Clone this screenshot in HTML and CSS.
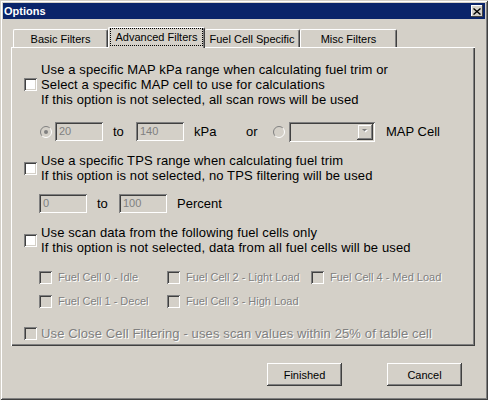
FILE: index.html
```html
<!DOCTYPE html>
<html lang="en">
<head>
    <meta charset="UTF-8">
    <title>Options</title>
    <link rel="stylesheet" href="styles.css">
</head>
<body>
    <div class="window">
        <div class="titlebar">
            <span class="title">Options</span>
            <span class="close">
                <svg width="8" height="7" viewBox="0 0 8 7">
                    <path d="M0.5 0.5L7.5 6.5M7.5 0.5L0.5 6.5" stroke="#000" stroke-width="1.4"/>
                </svg>
            </span>
        </div>

        <div class="dialog">
            <div class="tabs">
                <div class="tab tab-basic">Basic Filters</div>
                <div class="tab tab-active"><span class="focus">Advanced Filters</span></div>
                <div class="tab tab-fuel">Fuel Cell Specific</div>
                <div class="tab tab-misc">Misc Filters</div>
            </div>

            <div class="panel">
                <!-- MAP kPa option -->
                <div class="option opt-map">
                    <span class="check"></span>
                    <div class="label">Use a specific MAP kPa range when calculating fuel trim or<br>
                        Select a specific MAP cell to use for calculations<br>
                        If this option is not selected, all scan rows will be used</div>
                </div>
                <div class="range range-map">
                    <svg class="radio" width="12" height="12" viewBox="0 0 12 12">
                        <circle cx="6" cy="6" r="5.5" fill="#d4d0c8"/>
                        <path d="M2.11 9.89A5.5 5.5 0 0 1 9.89 2.11" fill="none" stroke="#808080"/>
                        <path d="M9.89 2.11A5.5 5.5 0 0 1 2.11 9.89" fill="none" stroke="#fff"/>
                        <circle cx="6" cy="6" r="2" fill="#808080"/>
                    </svg>
                    <span class="field">20</span>
                    <span class="word w-to">to</span>
                    <span class="field">140</span>
                    <span class="word w-kpa">kPa</span>
                    <span class="word w-or">or</span>
                    <svg class="radio" width="12" height="12" viewBox="0 0 12 12">
                        <circle cx="6" cy="6" r="5.5" fill="#d4d0c8"/>
                        <path d="M2.11 9.89A5.5 5.5 0 0 1 9.89 2.11" fill="none" stroke="#808080"/>
                        <path d="M9.89 2.11A5.5 5.5 0 0 1 2.11 9.89" fill="none" stroke="#fff"/>
                    </svg>
                    <span class="combo">
                        <span class="drop">
                            <svg width="7" height="5" viewBox="0 0 7 5">
                                <path d="M1 1H6L3.5 3.5Z" fill="#fff"/>
                                <path d="M0 0H5L2.5 2.5Z" fill="#808080"/>
                            </svg>
                        </span>
                    </span>
                    <span class="word w-cell">MAP Cell</span>
                </div>

                <!-- TPS option -->
                <div class="option opt-tps">
                    <span class="check"></span>
                    <div class="label">Use a specific TPS range when calculating fuel trim<br>
                        If this option is not selected, no TPS filtering will be used</div>
                </div>
                <div class="range range-tps">
                    <span class="field">0</span>
                    <span class="word w-to2">to</span>
                    <span class="field">100</span>
                    <span class="word w-pct">Percent</span>
                </div>

                <!-- fuel cell option -->
                <div class="option opt-cells">
                    <span class="check"></span>
                    <div class="label">Use scan data from the following fuel cells only<br>
                        If this option is not selected, data from all fuel cells will be used</div>
                </div>
                <div class="cells">
                    <div class="cell"><span class="check off"></span><span class="dis">Fuel Cell 0 - Idle</span></div>
                    <div class="cell"><span class="check off"></span><span class="dis">Fuel Cell 2 - Light Load</span></div>
                    <div class="cell"><span class="check off"></span><span class="dis">Fuel Cell 4 - Med Load</span></div>
                </div>
                <div class="cells">
                    <div class="cell"><span class="check off"></span><span class="dis">Fuel Cell 1 - Decel</span></div>
                    <div class="cell"><span class="check off"></span><span class="dis">Fuel Cell 3 - High Load</span></div>
                </div>

                <div class="option opt-close">
                    <span class="check off"></span>
                    <div class="label dis">Use Close Cell Filtering - uses scan values within 25% of table cell</div>
                </div>
            </div>

            <div class="buttons">
                <button class="btn">Finished</button>
                <button class="btn">Cancel</button>
            </div>
        </div>
    </div>
</body>
</html>
```

FILE: styles.css
```css
* {
    box-sizing: border-box;
}

body {
    margin: 0;
    width: 488px;
    height: 400px;
    overflow: hidden;
    background: #d4d0c8;
    font-family: "Liberation Sans", Arial, sans-serif;
    color: #000;
}

.window {
    width: 488px;
    height: 400px;
    padding: 3px;
    background: #d4d0c8;
    box-shadow: inset 1px 1px 0 #d4d0c8, inset -1px -1px 0 #404040,
                inset 2px 2px 0 #fff, inset -2px -2px 0 #808080;
}

.titlebar {
    height: 16px;
    background: #0a246a;
    display: flex;
    align-items: center;
    justify-content: space-between;
    padding: 0 2px 0 1px;
}

.title {
    color: #fff;
    font-weight: bold;
    font-size: 11px;
}

.close {
    width: 12px;
    height: 12px;
    background: #d4d0c8;
    display: flex;
    align-items: center;
    justify-content: center;
    box-shadow: inset -1px -1px 0 #404040, inset 1px 1px 0 #fff;
}

.dialog {
    padding: 8px 0 0 8px;
}

/* tabs */
.tabs {
    display: flex;
    align-items: flex-end;
    height: 20px;
    margin-left: 2px;
    position: relative;
    z-index: 1;
}

.tab {
    height: 18px;
    font-size: 11px;
    display: flex;
    align-items: center;
    justify-content: center;
    background: #d4d0c8;
    border-left: 1px solid #fff;
    border-top: 1px solid #fff;
    border-right: 1px solid #404040;
    border-radius: 2px 2px 0 0;
    box-shadow: inset -1px 0 0 #808080;
}

.tab-basic { width: 95px; }
.tab-fuel { width: 95px; border-left: none; }
.tab-misc { width: 97px; }

.tab-active {
    width: 97px;
    height: 21px;
    margin-bottom: -1px;
    align-items: flex-start;
    padding: 0 1px 0 1px;
}

.focus {
    flex: 1;
    height: 18px;
    border: 1px dotted #000;
    display: flex;
    align-items: center;
    justify-content: center;
    font-size: 11px;
}

.panel {
    width: 464px;
    height: 299px;
    padding-top: 15px;
    box-shadow: inset 1px 1px 0 #fff, inset -1px -1px 0 #404040, inset -2px -2px 0 #808080;
}

/* controls */
.check {
    flex: none;
    width: 13px;
    height: 13px;
    background: #fff;
    box-shadow: inset 1px 1px 0 #808080, inset -1px -1px 0 #fff,
                inset 2px 2px 0 #404040, inset -2px -2px 0 #d4d0c8;
}

.check.off {
    background: #d4d0c8;
}

.dis {
    color: #808080;
    text-shadow: 1px 1px 0 #fff;
}

.option {
    display: flex;
    align-items: center;
    padding-left: 13px;
    font-size: 13px;
    line-height: 15px;
    letter-spacing: 0.12px;
}

.option .label {
    margin-left: 4px;
}

.opt-map { height: 45px; }
.opt-tps { height: 30px; margin-top: 11px; }
.opt-cells { height: 30px; margin-top: 12px; }
.opt-close { height: 16px; margin-top: 17px; }

.range {
    display: flex;
    align-items: center;
    font-size: 13px;
}

.range-map {
    height: 21px;
    margin-top: 14px;
    padding-left: 29px;
}

.range-tps {
    height: 20px;
    margin-top: 10px;
    padding-left: 28px;
}

.radio {
    flex: none;
}

.field {
    flex: none;
    width: 48px;
    height: 19px;
    background: #d4d0c8;
    color: #808080;
    font-size: 11px;
    line-height: 19px;
    padding-left: 4px;
    box-shadow: inset 1px 1px 0 #808080, inset -1px -1px 0 #fff,
                inset 2px 2px 0 #404040, inset -2px -2px 0 #d4d0c8;
}

.range-map .field:first-of-type { margin-left: 3px; }

.word { flex: none; }
.w-to { width: 23px; margin-left: 10px; }
.w-kpa { width: 52px; margin-left: 10px; }
.w-or { width: 27px; }
.w-cell { margin-left: 11px; }
.w-to2 { width: 22px; margin-left: 10px; }
.w-pct { margin-left: 10px; }

.combo {
    flex: none;
    width: 86px;
    height: 20px;
    margin-left: 4px;
    background: #d4d0c8;
    display: flex;
    justify-content: flex-end;
    padding: 2px;
    box-shadow: inset 1px 1px 0 #808080, inset -1px -1px 0 #fff,
                inset 2px 2px 0 #404040, inset -2px -2px 0 #d4d0c8;
}

.drop {
    width: 16px;
    height: 16px;
    display: flex;
    align-items: center;
    justify-content: center;
    box-shadow: inset -1px -1px 0 #404040, inset 1px 1px 0 #d4d0c8,
                inset -2px -2px 0 #808080, inset 2px 2px 0 #fff;
}

.cells {
    display: flex;
    height: 14px;
    margin-top: 10px;
    padding-left: 28px;
    font-size: 11px;
}

.opt-cells + .cells {
    margin-top: 15px;
}

.cell {
    display: flex;
    align-items: center;
    gap: 6px;
}

.cell:nth-child(1) { width: 128px; }
.cell:nth-child(2) { width: 144px; }

.buttons {
    display: flex;
    justify-content: flex-end;
    gap: 45px;
    margin-top: 17px;
    padding-right: 23px;
}

.btn {
    width: 75px;
    height: 23px;
    font-family: "Liberation Sans", Arial, sans-serif;
    font-size: 11px;
    color: #000;
    background: #d4d0c8;
    border: none;
    padding: 0;
    box-shadow: inset -1px -1px 0 #404040, inset 1px 1px 0 #fff,
                inset -2px -2px 0 #808080, inset 2px 2px 0 #d4d0c8;
}
```
